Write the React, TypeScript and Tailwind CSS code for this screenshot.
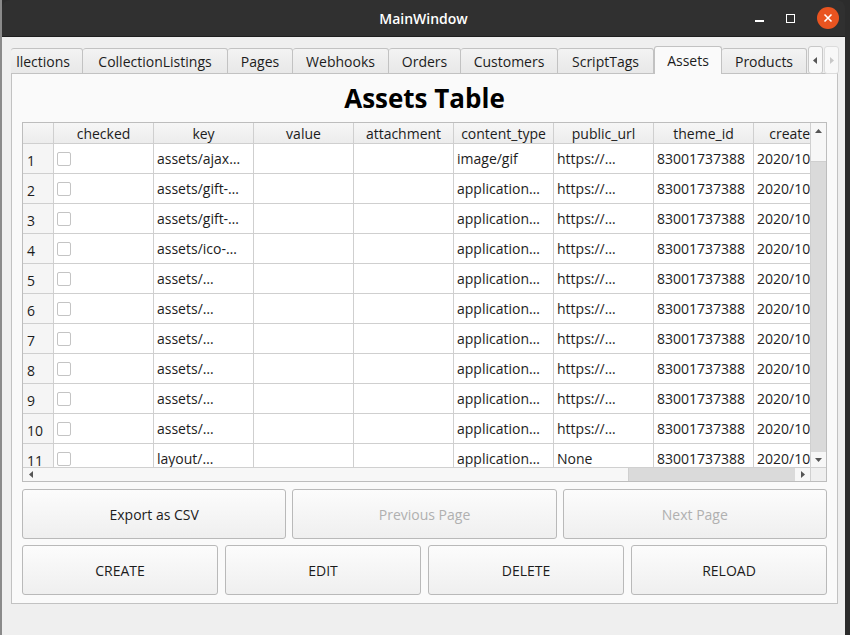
import React from "react";

// Qt-achtig venster met tabbladen en een tabel met assets.

const TABS = [
  { label: "llections", w: 72 },
  { label: "CollectionListings", w: 145 },
  { label: "Pages", w: 65 },
  { label: "Webhooks", w: 96 },
  { label: "Orders", w: 72 },
  { label: "Customers", w: 97 },
  { label: "ScriptTags", w: 96 },
  { label: "Assets", w: 68, active: true },
  { label: "Products", w: 85 },
];

const COLS = ["checked", "key", "value", "attachment", "content_type", "public_url", "theme_id", "created_at"];

const ROWS = [
  { key: "assets/ajax…", type: "image/gif", url: "https://…" },
  { key: "assets/gift-…", type: "application…", url: "https://…" },
  { key: "assets/gift-…", type: "application…", url: "https://…" },
  { key: "assets/ico-…", type: "application…", url: "https://…" },
  { key: "assets/…", type: "application…", url: "https://…" },
  { key: "assets/…", type: "application…", url: "https://…" },
  { key: "assets/…", type: "application…", url: "https://…" },
  { key: "assets/…", type: "application…", url: "https://…" },
  { key: "assets/…", type: "application…", url: "https://…" },
  { key: "assets/…", type: "application…", url: "https://…" },
  { key: "layout/…", type: "application…", url: "None" },
];

function Btn({ label, disabled }: { label: string; disabled?: boolean }) {
  return (
    <button
      className={
        "flex-1 h-[50px] rounded-[3px] border border-[#b9b9b9] bg-gradient-to-b from-[#fcfcfc] to-[#efefef] text-[14px] " +
        (disabled ? "text-[#b0b0b0]" : "text-[#1c1c1c]")
      }
    >
      {label}
    </button>
  );
}

function Cell({ children, w = 100 }: { children?: React.ReactNode; w?: number }) {
  return (
    <div
      className="shrink-0 h-full border-r border-[#cfcfcf] bg-white px-[3px] flex items-center text-[14px] text-[#1c1c1c] whitespace-nowrap overflow-hidden"
      style={{ width: w }}
    >
      {children}
    </div>
  );
}

export default function App() {
  return (
    <div className="w-[850px] h-[635px] flex bg-[#2c2c2c] font-['Open_Sans',sans-serif] overflow-hidden">
      <div className="w-[2px] bg-[#8a8a8a]" />
      <div className="w-[843px] flex flex-col">
        {/* Titelbalk */}
        <div className="h-[37px] shrink-0 rounded-t-[8px] bg-[#303030] border-b border-[#1e1e1e] flex items-center relative">
          <div className="flex-1 text-center text-white text-[14px] font-semibold">MainWindow</div>
          <div className="absolute right-[6px] top-[7px] flex items-center gap-[22px]">
            <div className="w-[9px] h-[1.5px] bg-white mt-[6px]" />
            <div className="w-[9px] h-[9px] border-[1.5px] border-white" />
            <div className="w-[22px] h-[22px] rounded-full bg-[#e95420] flex items-center justify-center">
              <svg width="10" height="10" viewBox="0 0 10 10">
                <path d="M1.5 1.5 L8.5 8.5 M8.5 1.5 L1.5 8.5" stroke="white" strokeWidth="1.6" />
              </svg>
            </div>
          </div>
        </div>

        {/* Inhoud */}
        <div className="flex-1 bg-[#efefef] pl-[9px] pr-[6px] pt-[9px] flex flex-col">
          {/* Tabbladen */}
          <div className="h-[28px] flex items-end relative z-10">
            {TABS.map((t, i) => (
              <div
                key={i}
                className={
                  "shrink-0 flex items-center text-[14px] text-[#1c1c1c] border border-[#c2c2c2] rounded-t-[3px] overflow-hidden whitespace-nowrap " +
                  (t.active
                    ? "h-[28px] bg-[#fafafa] border-b-0 justify-center"
                    : i === 0
                    ? "h-[26px] bg-gradient-to-b from-[#f3f3f3] to-[#e8e8e8] justify-end pr-[12px] border-l-0"
                    : "h-[26px] bg-gradient-to-b from-[#f3f3f3] to-[#e8e8e8] justify-center border-l-0")
                }
                style={{ width: t.w }}
              >
                {t.label}
              </div>
            ))}
            <div className="ml-auto flex h-[28px] self-start gap-px">
              <div className="w-[15px] h-[28px] rounded-[3px] border border-[#c8c8c8] bg-[#f8f8f8] flex items-center justify-center">
                <svg width="5" height="7" viewBox="0 0 5 7"><path d="M4 0 L0 3.5 L4 7 Z" fill="#555" /></svg>
              </div>
              <div className="w-[15px] h-[28px] rounded-[3px] border border-[#dcdcdc] bg-[#f8f8f8] flex items-center justify-center">
                <svg width="5" height="7" viewBox="0 0 5 7"><path d="M1 0 L5 3.5 L1 7 Z" fill="#c8c8c8" /></svg>
              </div>
            </div>
          </div>

          {/* Paneel */}
          <div className="h-[531px] -mt-px mr-px border border-[#c2c2c2] bg-[#fafafa] px-[10px] flex flex-col">
            <div className="h-[48px] shrink-0 flex items-center justify-center text-[26px] font-bold text-black">
              Assets Table
            </div>

            {/* Tabel */}
            <div className="h-[360px] shrink-0 border border-[#bdbdbd] flex flex-col bg-white">
              <div className="flex flex-1 min-h-0">
                <div className="flex-1 min-w-0 overflow-hidden flex flex-col">
                  <div className="h-[21px] shrink-0 flex border-b border-[#cfcfcf]">
                    <div className="w-[31px] shrink-0 border-r border-[#cfcfcf] bg-gradient-to-b from-[#f6f6f6] to-[#ececec]" />
                    {COLS.map((c) => (
                      <div
                        key={c}
                        className="w-[100px] shrink-0 border-r border-[#cfcfcf] bg-gradient-to-b from-[#f6f6f6] to-[#ececec] flex items-center justify-center text-[14px] text-[#1c1c1c] whitespace-nowrap overflow-hidden"
                      >
                        {c}
                      </div>
                    ))}
                  </div>
                  {ROWS.map((r, i) => (
                    <div key={i} className="h-[30px] shrink-0 flex border-b border-[#cfcfcf]">
                      <div className="w-[31px] shrink-0 border-r border-[#cfcfcf] bg-[#f5f5f5] pl-[4px] pt-[3px] flex items-center text-[14px] text-[#1c1c1c]">
                        {i + 1}
                      </div>
                      <Cell>
                        <div className="w-[14px] h-[14px] border border-[#c4c4c4] bg-white rounded-[2px]" />
                      </Cell>
                      <Cell>{r.key}</Cell>
                      <Cell />
                      <Cell />
                      <Cell>{r.type}</Cell>
                      <Cell>{r.url}</Cell>
                      <Cell>83001737388</Cell>
                      <Cell>2020/10/07</Cell>
                    </div>
                  ))}
                </div>

                {/* Verticale schuifbalk */}
                <div className="w-[16px] shrink-0 border-l border-[#d0d0d0] flex flex-col bg-[#dadada]">
                  <div className="h-[15px] bg-[#f7f7f7] flex items-center justify-center">
                    <svg width="7" height="4" viewBox="0 0 7 4"><path d="M0 4 L3.5 0 L7 4 Z" fill="#555" /></svg>
                  </div>
                  <div className="h-[24px] bg-[#f7f7f7] border-b border-[#cfcfcf]" />
                  <div className="flex-1" />
                  <div className="h-[15px] bg-[#f7f7f7] flex items-center justify-center">
                    <svg width="7" height="4" viewBox="0 0 7 4"><path d="M0 0 L3.5 4 L7 0 Z" fill="#555" /></svg>
                  </div>
                </div>
              </div>

              {/* Horizontale schuifbalk */}
              <div className="h-[14px] shrink-0 border-t border-[#d0d0d0] flex">
                <div className="w-[15px] bg-[#f7f7f7] flex items-center justify-center">
                  <svg width="4" height="7" viewBox="0 0 4 7"><path d="M4 0 L0 3.5 L4 7 Z" fill="#555" /></svg>
                </div>
                <div className="w-[591px] bg-[#f7f7f7] border-r border-[#cfcfcf]" />
                <div className="flex-1 bg-[#dadada]" />
                <div className="w-[15px] bg-[#f7f7f7] flex items-center justify-center">
                  <svg width="4" height="7" viewBox="0 0 4 7"><path d="M0 0 L4 3.5 L0 7 Z" fill="#555" /></svg>
                </div>
                <div className="w-[16px] bg-[#efefef] border-l border-[#d0d0d0]" />
              </div>
            </div>

            <div className="mt-[7px] flex gap-[6px]">
              <Btn label="Export as CSV" />
              <Btn label="Previous Page" disabled />
              <Btn label="Next Page" disabled />
            </div>
            <div className="mt-[6px] flex gap-[7px]">
              <Btn label="CREATE" />
              <Btn label="EDIT" />
              <Btn label="DELETE" />
              <Btn label="RELOAD" />
            </div>
          </div>
        </div>
      </div>
      <div className="flex-1 bg-[#2c2c2c]" />
    </div>
  );
}
